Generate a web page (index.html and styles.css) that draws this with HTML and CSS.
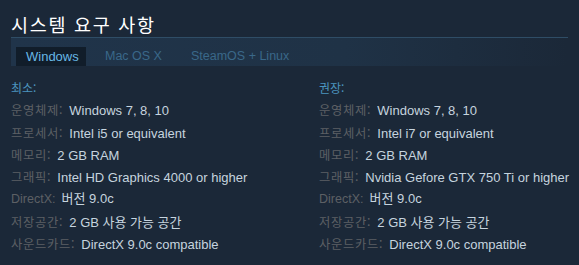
FILE: index.html
```html
<!DOCTYPE html>
<html lang="ko">
<head>
<meta charset="utf-8">
<link rel="stylesheet" href="styles.css">
</head>
<body>
<div class="page">
  <h2 class="title">시스템 요구 사항</h2>
  <div class="tabs">
    <div class="tab active">Windows</div>
    <div class="tab">Mac OS X</div>
    <div class="tab">SteamOS + Linux</div>
  </div>
  <div class="cols">
    <ul class="col">
      <li class="head">최소:</li>
      <li><span class="k">운영체제:</span> Windows 7, 8, 10</li>
      <li><span class="k">프로세서:</span> Intel i5 or equivalent</li>
      <li><span class="k">메모리:</span> 2 GB RAM</li>
      <li><span class="k">그래픽:</span> Intel HD Graphics 4000 or higher</li>
      <li><span class="k latin">DirectX:</span> 버전 9.0c</li>
      <li><span class="k">저장공간:</span> 2 GB 사용 가능 공간</li>
      <li><span class="k">사운드카드:</span> DirectX 9.0c compatible</li>
    </ul>
    <ul class="col">
      <li class="head">권장:</li>
      <li><span class="k">운영체제:</span> Windows 7, 8, 10</li>
      <li><span class="k">프로세서:</span> Intel i7 or equivalent</li>
      <li><span class="k">메모리:</span> 2 GB RAM</li>
      <li><span class="k">그래픽:</span> Nvidia Gefore GTX 750 Ti or higher</li>
      <li><span class="k latin">DirectX:</span> 버전 9.0c</li>
      <li><span class="k">저장공간:</span> 2 GB 사용 가능 공간</li>
      <li><span class="k">사운드카드:</span> DirectX 9.0c compatible</li>
    </ul>
  </div>
</div>
</body>
</html>
```
FILE: styles.css
```css
html, body {
  margin: 0;
  padding: 0;
  background: #1b2838;
}
.page {
  padding: 12px 11px 0 11px;
  font-family: "Liberation Sans", Arial, "Noto Sans CJK KR", sans-serif;
}
.title {
  margin: 0;
  font-family: "Noto Sans CJK KR", sans-serif;
  font-weight: 400;
  font-size: 18.5px;
  letter-spacing: 1.7px;
  color: #ffffff;
  line-height: 25px;
  height: 25px;
}
.tabs {
  display: flex;
  align-items: flex-end;
  height: 28px;
  border-top: 1px solid #2f4d66;
  background: linear-gradient(to right, #20344a 0%, #1f3246 60%, #1b2838 100%);
  padding-left: 5px;
}
.tab {
  font-family: "Liberation Sans", Arial, sans-serif;
  font-size: 12.5px;
  color: #3a6889;
  height: 19px;
  line-height: 19px;
  padding: 0 10px;
}
.tab:nth-child(2) { padding-left: 9px; padding-right: 20px; }
.tab:nth-child(3) { padding-left: 9px; }
.tab.active {
  background: #111d2a;
  color: #67b8e6;
  padding: 0 10px;
  width: 50px;
  text-align: center;
  margin-right: 10px;
  font-size: 13px;
}
.cols {
  display: grid;
  grid-template-columns: 308px 1fr;
  padding-top: 11px;
}
.col {
  list-style: none;
  margin: 0;
  padding: 0;
}
.col li {
  font-size: 13px;
  line-height: 22.3px;
  height: 22.3px;
  color: #c6d4df;
  white-space: nowrap;
}
.col li.head {
  color: #4b94bf;
  font-family: "Noto Sans CJK KR", sans-serif;
  font-size: 12px;
}
.k {
  color: #5d6065;
  font-family: "Noto Sans CJK KR", "Noto Sans", sans-serif;
  font-size: 12.3px;
  letter-spacing: 0.7px;
  margin-right: 2.5px;
}
.k.latin {
  font-family: "Liberation Sans", Arial, sans-serif;
  font-size: 12.5px;
  letter-spacing: 0;
}
```
